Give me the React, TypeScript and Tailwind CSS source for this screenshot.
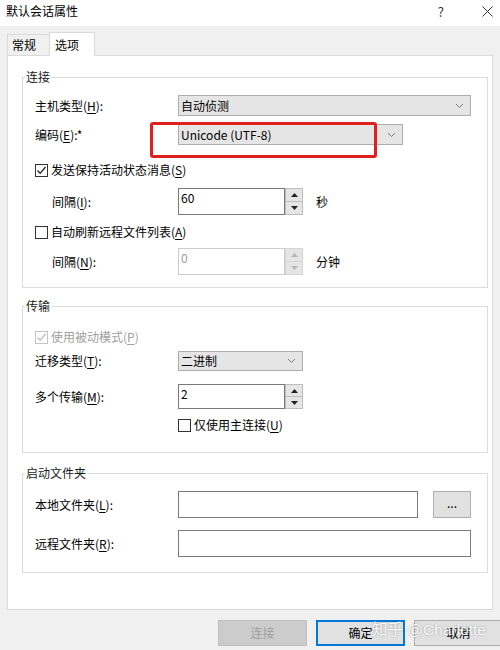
import React from "react";

const Chevron = ({ color = "#7a7a7a" }: { color?: string }) => (
  <svg width="9" height="6" viewBox="0 0 9 6">
    <polyline points="1,1 4.5,4.5 8,1" fill="none" stroke={color} strokeWidth="1" />
  </svg>
);

const Combo = ({ w, h = 21, text }: { w: string; h?: number; text: string }) => (
  <div
    className={`${w} flex items-center justify-between border border-[#adadad] bg-[#e5e5e5] pl-[2px] pr-[6px] text-[12px] text-black`}
    style={{ height: h }}
  >
    <span>{text}</span>
    <Chevron />
  </div>
);

const Tri = ({ up, color }: { up: boolean; color: string }) => (
  <svg width="7" height="4" viewBox="0 0 7 4">
    {up ? <polygon points="0,4 3.5,0 7,4" fill={color} /> : <polygon points="0,0 7,0 3.5,4" fill={color} />}
  </svg>
);

const Spin = ({ value, h, disabled }: { value: string; h: number; disabled?: boolean }) => (
  <div className="flex" style={{ height: h }}>
    <div
      className={`w-[107px] border bg-white pl-[2px] pt-[1px] text-[12px] leading-[16px] ${
        disabled ? "border-[#cccccc] text-[#9a9a9a]" : "border-[#7a7a7a] text-black"
      }`}
    >
      {value}
    </div>
    <div className={`flex w-[18px] flex-col border ${disabled ? "border-[#d4d4d4]" : "border-[#bdbdbd]"} bg-[#e5e5e5]`}>
      <div className={`flex flex-1 items-center justify-center border-b ${disabled ? "border-[#d4d4d4]" : "border-[#bdbdbd]"}`}>
        <Tri up color={disabled ? "#b5b5b5" : "#222"} />
      </div>
      <div className="flex flex-1 items-center justify-center">
        <Tri up={false} color={disabled ? "#b5b5b5" : "#222"} />
      </div>
    </div>
  </div>
);

const Check = ({ checked, disabled }: { checked?: boolean; disabled?: boolean }) => (
  <div
    className={`flex h-[13px] w-[13px] shrink-0 items-center justify-center border bg-white ${
      disabled ? "border-[#c4c4c4]" : "border-[#333333]"
    }`}
  >
    {checked && (
      <svg width="11" height="11" viewBox="0 0 11 11">
        <polyline
          points="1.5,5.5 4.2,8.3 9.5,2"
          fill="none"
          stroke={disabled ? "#bcbcbc" : "#222"}
          strokeWidth="1.3"
        />
      </svg>
    )}
  </div>
);

const U = ({ c }: { c: string }) => <span className="underline underline-offset-2">{c}</span>;

const Group = ({ title, children, className }: { title: string; children: React.ReactNode; className?: string }) => (
  <fieldset className={`ml-[14px] w-[466px] border border-[#dcdcdc] ${className ?? ""}`}>
    <legend className="ml-[2px] px-[1px] text-[12px] leading-[16px] text-[#1a1a1a]">{title}</legend>
    {children}
  </fieldset>
);

export default function App() {
  return (
    <div className="relative h-[650px] w-[500px] overflow-hidden bg-[#f0f0f0] font-['Noto_Sans_CJK_SC','Microsoft_YaHei',sans-serif] text-[12px] text-black">
      {/* Title bar */}
      <div className="flex h-[26px] items-start bg-white pt-[3px]">
        <span className="ml-[6px] text-[12px] leading-[16px]">默认会话属性</span>
        <span className="ml-auto mr-[38px] mt-[1px] text-[13px] leading-[16px] text-[#333]">?</span>
        <svg className="mr-[7px] mt-[3px]" width="11" height="11" viewBox="0 0 11 11">
          <line x1="0.5" y1="0.5" x2="10.5" y2="10.5" stroke="#333" strokeWidth="1" />
          <line x1="10.5" y1="0.5" x2="0.5" y2="10.5" stroke="#333" strokeWidth="1" />
        </svg>
      </div>

      {/* Tabs */}
      <div className="flex h-[29px] items-end pl-[7px]">
        <div className="flex h-[21px] w-[42px] items-center border border-r-0 border-b-0 border-[#d9d9d9] bg-[#f0f0f0] pl-[4px]">
          常规
        </div>
        <div className="relative z-10 -mb-px flex h-[24px] w-[46px] items-center border border-b-0 border-[#d9d9d9] bg-white pl-[5px]">
          选项
        </div>
      </div>

      {/* Tab page */}
      <div className="ml-[7px] flex h-[555px] w-[486px] flex-col border border-[#d9d9d9] bg-white pt-[13px]">
        <Group title="连接">
          <div className="flex flex-col pb-[12px] pl-[12px] pt-[10px]">
            <div className="flex h-[21px] items-center">
              <span className="w-[143px]">
                主机类型(<U c="H" />):
              </span>
              <Combo w="w-[293px]" text="自动侦测" />
            </div>
            <div className="mt-[8px] flex h-[21px] items-center">
              <span className="w-[143px]">
                编码(<U c="E" />):*
              </span>
              <Combo w="w-[225px]" text="Unicode (UTF-8)" />
            </div>
            <div className="mt-[15px] flex h-[20px] items-center gap-[3px]">
              <Check checked />
              <span>
                发送保持活动状态消息(<U c="S" />)
              </span>
            </div>
            <div className="mt-[8px] flex h-[27px] items-center pl-[17px]">
              <span className="w-[126px]">
                间隔(<U c="I" />):
              </span>
              <Spin value="60" h={27} />
              <span className="ml-[13px]">秒</span>
            </div>
            <div className="mt-[7px] flex h-[20px] items-center gap-[3px]">
              <Check />
              <span>
                自动刷新远程文件列表(<U c="A" />)
              </span>
            </div>
            <div className="mt-[6px] flex h-[27px] items-center pl-[17px]">
              <span className="w-[126px]">
                间隔(<U c="N" />):
              </span>
              <Spin value="0" h={27} disabled />
              <span className="ml-[13px]">分钟</span>
            </div>
          </div>
        </Group>

        <Group title="传输" className="mt-[10px]">
          <div className="flex flex-col pb-[17px] pl-[12px] pt-[13px]">
            <div className="flex h-[20px] items-center gap-[3px] text-[#a0a0a0]">
              <Check checked disabled />
              <span>
                使用被动模式(<U c="P" />)
              </span>
            </div>
            <div className="mt-[4px] flex h-[20px] items-center">
              <span className="w-[143px]">
                迁移类型(<U c="T" />):
              </span>
              <Combo w="w-[125px]" h={20} text="二进制" />
            </div>
            <div className="mt-[13px] flex h-[25px] items-center">
              <span className="w-[143px]">
                多个传输(<U c="M" />):
              </span>
              <Spin value="2" h={25} />
            </div>
            <div className="mt-[6px] flex h-[20px] items-center gap-[3px] pl-[143px]">
              <Check />
              <span>
                仅使用主连接(<U c="U" />)
              </span>
            </div>
          </div>
        </Group>

        <Group title="启动文件夹" className="mt-[12px]">
          <div className="flex flex-col pb-[15px] pl-[12px] pt-[10px]">
            <div className="flex h-[27px] items-center">
              <span className="w-[143px]">
                本地文件夹(<U c="L" />):
              </span>
              <div className="h-[27px] w-[240px] border border-[#7a7a7a] bg-white" />
              <div className="ml-[15px] flex h-[27px] w-[38px] items-center justify-center border border-[#adadad] bg-[#e1e1e1] pb-[4px] text-[12px]">
                ...
              </div>
            </div>
            <div className="mt-[12px] flex h-[27px] items-center">
              <span className="w-[143px]">
                远程文件夹(<U c="R" />):
              </span>
              <div className="h-[27px] w-[293px] border border-[#7a7a7a] bg-white" />
            </div>
          </div>
        </Group>
      </div>

      {/* Buttons */}
      <div className="mt-[10px] flex gap-[9px] pl-[218px]">
        <div className="flex h-[26px] w-[89px] shrink-0 items-center justify-center border border-[#bfbfbf] bg-[#cccccc] text-[#a0a0a0]">
          连接
        </div>
        <div className="flex h-[26px] w-[89px] shrink-0 items-center justify-center border-2 border-[#0078d7] bg-[#e1e1e1]">
          确定
        </div>
        <div className="flex h-[26px] w-[89px] shrink-0 items-center justify-center border border-[#adadad] bg-[#e1e1e1]">
          取消
        </div>
      </div>

      {/* Annotation */}
      <div className="absolute left-[150px] top-[122px] h-[36px] w-[227px] rounded-[3px] border-[3px] border-[#e0201f]" />

      {/* Watermark */}
      <div className="pointer-events-none absolute left-[372px] top-[621px] font-['Liberation_Sans','Noto_Sans_CJK_SC',sans-serif] text-[15.5px] leading-[18px] text-white/90 [text-shadow:0_0_2px_rgba(0,0,0,0.35)]">
        知乎 @Charlotte
      </div>
    </div>
  );
}
